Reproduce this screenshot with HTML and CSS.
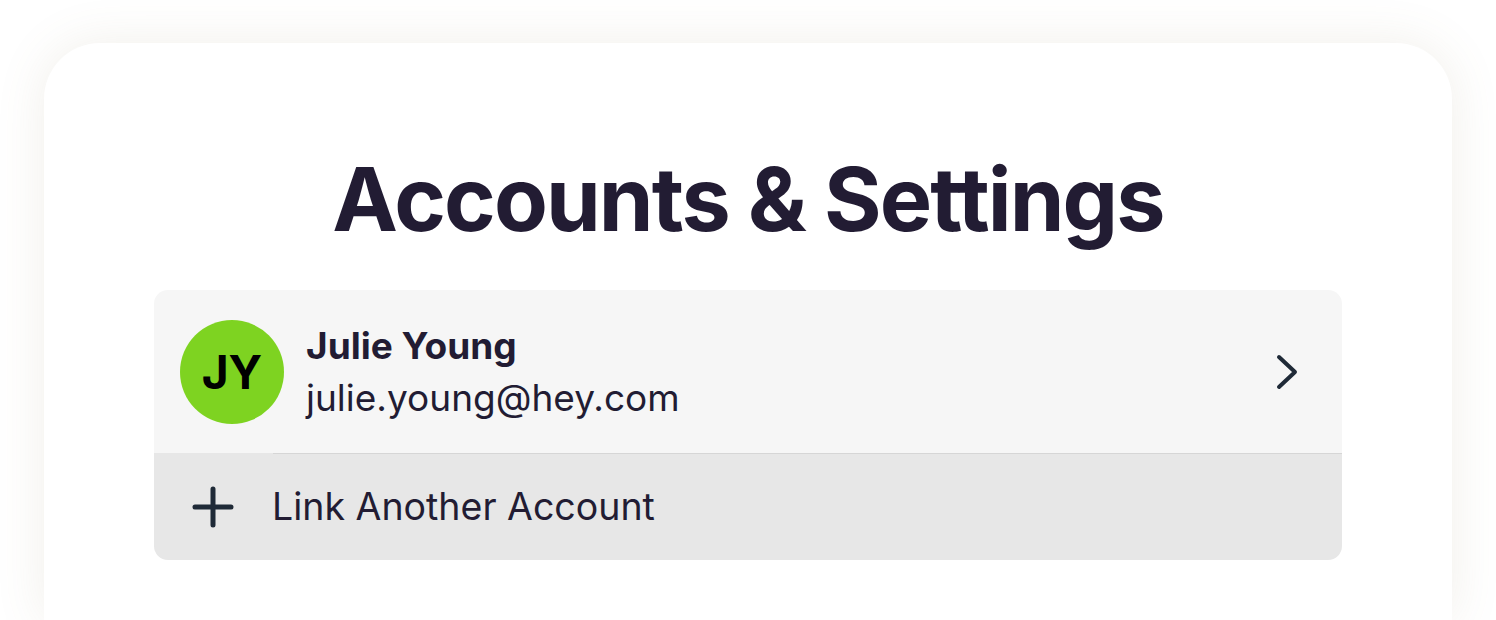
FILE: index.html
```html
<!DOCTYPE html>
<html lang="en">
<head>
  <meta charset="UTF-8" />
  <meta name="viewport" content="width=device-width, initial-scale=1.0" />
  <title>Accounts &amp; Settings</title>
  <link rel="stylesheet" href="styles.css">
</head>
<body>
  <div class="sheet">
    <h1>Accounts &amp; Settings</h1>

    <div class="accounts">
      <div class="account">
        <div class="avatar">JY</div>
        <div class="account-info">
          <div class="account-name">Julie Young</div>
          <div class="account-email">julie.young@hey.com</div>
        </div>
        <svg class="chevron" width="22" height="36" viewBox="0 0 22 36">
          <polyline points="3,3 19,18 3,33" fill="none" stroke="#1f2a37" stroke-width="4" stroke-linecap="round" stroke-linejoin="round" />
        </svg>
      </div>
      <div class="link-account">
        <svg class="plus" width="42" height="42" viewBox="0 0 42 42">
          <path d="M21 3 V39 M3 21 H39" fill="none" stroke="#1f2a37" stroke-width="5" stroke-linecap="round" />
        </svg>
        <span class="link-label">Link Another Account</span>
      </div>
    </div>
  </div>
</body>
</html>
```

FILE: styles.css
```css
html, body {
  height: 620px;
  overflow: hidden;
}
body {
  font-family: Inter, "Noto Sans", sans-serif;
  background: #ffffff;
  color: #221c33;
  margin: 0;
  padding: 43px 44px 0;
  box-sizing: border-box;
}
.sheet {
  background: #ffffff;
  border-radius: 56px 56px 0 0;
  box-shadow: 0 0 50px rgba(140, 120, 80, 0.12);
  padding: 112px 110px 0;
  height: 577px;
  box-sizing: border-box;
}
h1 {
  font-size: 88px;
  line-height: 88px;
  font-weight: 700;
  text-align: center;
  margin: 0 0 47px;
  letter-spacing: -1.9px;
}
.accounts {
  border-radius: 14px;
  overflow: hidden;
}
.account {
  display: flex;
  align-items: center;
  background: #f6f6f6;
  padding: 30px 44px 29px 26px;
}
.avatar {
  width: 104px;
  height: 104px;
  border-radius: 50%;
  background: #7ed321;
  color: #000000;
  font-size: 46px;
  font-weight: 700;
  display: flex;
  align-items: center;
  justify-content: center;
  flex-shrink: 0;
}
.account-info {
  flex: 1;
  margin-left: 22px;
}
.account-name {
  font-size: 37px;
  font-weight: 700;
  line-height: 52px;
}
.account-email {
  font-size: 37px;
  line-height: 52px;
}
.chevron {
  display: block;
}
.link-account {
  display: flex;
  align-items: center;
  background: #e7e7e7;
  height: 107px;
  padding-left: 38px;
  position: relative;
}
.link-account::before {
  content: "";
  position: absolute;
  top: 0;
  left: 119px;
  right: 0;
  height: 1px;
  background: #d6d6d6;
}
.plus {
  display: block;
}
.link-label {
  font-size: 37.5px;
  margin-left: 38px;
}
```
